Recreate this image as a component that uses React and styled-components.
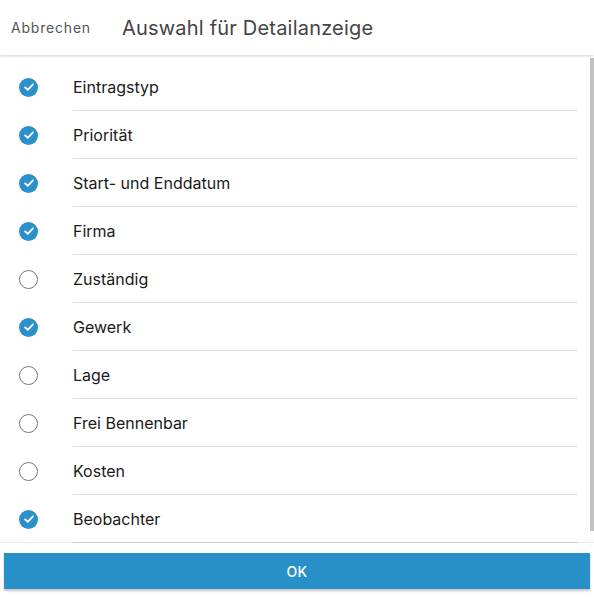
import styled, { createGlobalStyle } from 'styled-components'

const GlobalStyle = createGlobalStyle`
    html, body {
        margin: 0;
        padding: 0;
        background: #fff;
    }
    body {
        font-family: Inter, "Noto Sans", sans-serif;
    }
`

const Page = styled.div`
    display: flex;
    flex-direction: column;
    height: 597px;
    width: 594px;
    background: #fff;
`

const Header = styled.div`
    display: flex;
    align-items: center;
    height: 55px;
    flex-shrink: 0;
    position: relative;
    z-index: 1;
    box-shadow: 0 1px 3px rgba(0, 0, 0, 0.18);
`

const CancelButton = styled.button`
    border: none;
    background: none;
    padding: 0 0 0 11px;
    width: 122px;
    text-align: left;
    font-family: inherit;
    font-size: 14px;
    letter-spacing: 0.8px;
    color: #555;
    cursor: pointer;
`

const Title = styled.h1`
    margin: 0;
    font-size: 20px;
    font-weight: 400;
    color: #444;
    letter-spacing: 0.2px;
`

const Body = styled.div`
    flex: 1;
    display: flex;
    min-height: 0;
`

const List = styled.div`
    flex: 1;
    overflow-y: auto;
    padding: 8px 0 14px;
    scrollbar-width: none;

    &::-webkit-scrollbar {
        display: none;
    }
`

const ScrollTrack = styled.div`
    width: 4px;
    flex-shrink: 0;
    padding: 3px 0 12px;
    display: flex;
`

const ScrollThumb = styled.div`
    flex: 1;
    background: #c2c2c2;
`

const Row = styled.label`
    display: flex;
    align-items: center;
    height: 48px;
    padding-left: 19px;
    cursor: pointer;
`

const Check = styled.span`
    width: 19px;
    height: 19px;
    box-sizing: border-box;
    border-radius: 50%;
    flex-shrink: 0;
    display: flex;
    align-items: center;
    justify-content: center;
    background: ${p => p.checked ? '#2a8fcb' : 'transparent'};
    border: ${p => p.checked ? 'none' : '1.6px solid #777'};
`

const Label = styled.span`
    flex: 1;
    align-self: stretch;
    display: flex;
    align-items: center;
    margin-left: 35px;
    margin-right: 13px;
    font-size: 16px;
    color: #1a1a1a;
    border-bottom: 1px solid #dcdcdc;
    padding-top: 1px;
`

const Footer = styled.div`
    flex-shrink: 0;
    position: relative;
    margin-top: -1px;
    padding: 10px 4px 8px;
    border-top: 1px solid rgba(0, 0, 0, 0.09);
`

const OkButton = styled.button`
    display: block;
    width: 100%;
    height: 36px;
    border: none;
    border-radius: 0;
    background: #2790c8;
    color: #fff;
    font-family: inherit;
    font-size: 14px;
    font-weight: 500;
    letter-spacing: 0.3px;
    box-shadow: 0 2px 2px rgba(0, 0, 0, 0.22);
    cursor: pointer;
`

const entries = [
    { name: 'Eintragstyp', checked: true },
    { name: 'Priorität', checked: true },
    { name: 'Start- und Enddatum', checked: true },
    { name: 'Firma', checked: true },
    { name: 'Zuständig', checked: false },
    { name: 'Gewerk', checked: true },
    { name: 'Lage', checked: false },
    { name: 'Frei Bennenbar', checked: false },
    { name: 'Kosten', checked: false },
    { name: 'Beobachter', checked: true },
]

const CheckMark = () => (
    <svg width="12" height="12" viewBox="0 0 12 12">
        <path d="M2.1 6.3 L4.8 8.9 L9.9 3.3" fill="none" stroke="#fff" strokeWidth="1.8" strokeLinecap="round" strokeLinejoin="round" />
    </svg>
)

const App = () => {
    return (
        <Page>
            <GlobalStyle />
            <Header>
                <CancelButton>Abbrechen</CancelButton>
                <Title>Auswahl für Detailanzeige</Title>
            </Header>
            <Body>
                <List>
                    {entries.map((entry) =>
                        <Row key={entry.name}>
                            <Check checked={entry.checked}>
                                {entry.checked ? <CheckMark /> : null}
                            </Check>
                            <Label>{entry.name}</Label>
                        </Row>
                    )}
                </List>
                <ScrollTrack>
                    <ScrollThumb />
                </ScrollTrack>
            </Body>
            <Footer>
                <OkButton>OK</OkButton>
            </Footer>
        </Page>
    )
}

export default App
